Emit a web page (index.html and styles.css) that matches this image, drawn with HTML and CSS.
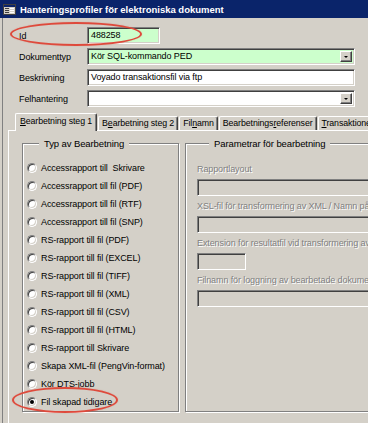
FILE: index.html
```html
<!DOCTYPE html>
<html lang="sv">
<head>
    <meta charset="UTF-8">
    <title>Hanteringsprofiler för elektroniska dokument</title>
    <link rel="stylesheet" href="styles.css">
</head>
<body>
    <div class="window">
        <div class="titlebar">
            <svg class="app-icon" width="13" height="11" viewBox="0 0 13 11">
                <rect x="0.5" y="0.5" width="12" height="10" fill="#d4d0c8" stroke="#404040"/>
                <rect x="1" y="1" width="11" height="2" fill="#0a246a"/>
                <rect x="2" y="4" width="4" height="1" fill="#404040"/>
                <rect x="7" y="4" width="4" height="1" fill="#fff"/>
                <rect x="2" y="6" width="4" height="1" fill="#404040"/>
                <rect x="7" y="6" width="4" height="1" fill="#fff"/>
                <rect x="2" y="8" width="4" height="1" fill="#404040"/>
                <rect x="7" y="8" width="4" height="1" fill="#fff"/>
            </svg>
            <span class="title">Hanteringsprofiler för elektroniska dokument</span>
        </div>

        <div class="form">
            <div class="fields">
                <span class="label">Id</span>
                <div class="field field-id green">488258</div>

                <span class="label">Dokumenttyp</span>
                <div class="field green combo">Kör SQL-kommando PED<span class="drop"></span></div>

                <span class="label">Beskrivning</span>
                <div class="field">Voyado transaktionsfil via ftp</div>

                <span class="label">Felhantering</span>
                <div class="field combo"><span class="drop"></span></div>
            </div>

            <div class="tabs">
                <div class="tab active"><u>B</u>earbetning steg 1</div>
                <div class="tab">B<u>e</u>arbetning steg 2</div>
                <div class="tab">Fil<u>n</u>amn</div>
                <div class="tab">Bearbetnings<u>r</u>eferenser</div>
                <div class="tab"><u>T</u>ransaktioner</div>
            </div>

            <div class="panel">
                <fieldset class="group group-type">
                    <legend>Typ av Bearbetning</legend>
                    <div class="option"><span class="radio"></span>Accessrapport till&nbsp; Skrivare</div>
                    <div class="option"><span class="radio"></span>Accessrapport till fil (PDF)</div>
                    <div class="option"><span class="radio"></span>Accessrapport till fil (RTF)</div>
                    <div class="option"><span class="radio"></span>Accessrapport till fil (SNP)</div>
                    <div class="option"><span class="radio"></span>RS-rapport till fil (PDF)</div>
                    <div class="option"><span class="radio"></span>RS-rapport till fil (EXCEL)</div>
                    <div class="option"><span class="radio"></span>RS-rapport till fil (TIFF)</div>
                    <div class="option"><span class="radio"></span>RS-rapport till fil (XML)</div>
                    <div class="option"><span class="radio"></span>RS-rapport till fil (CSV)</div>
                    <div class="option"><span class="radio"></span>RS-rapport till fil (HTML)</div>
                    <div class="option"><span class="radio"></span>RS-rapport till Skrivare</div>
                    <div class="option"><span class="radio"></span>Skapa XML-fil (PengVin-format)</div>
                    <div class="option"><span class="radio"></span>Kör DTS-jobb</div>
                    <div class="option"><span class="radio checked"></span>Fil skapad tidigare</div>
                </fieldset>

                <fieldset class="group group-params">
                    <legend>Parametrar för bearbetning</legend>
                    <div class="param">
                        <span class="dim">Rapportlayout</span>
                        <div class="field disabled"></div>
                    </div>
                    <div class="param">
                        <span class="dim">XSL-fil för transformering av XML / Namn på</span>
                        <div class="field disabled"></div>
                    </div>
                    <div class="param">
                        <span class="dim">Extension för resultatfil vid transformering av</span>
                        <div class="field disabled short"></div>
                    </div>
                    <div class="param">
                        <span class="dim">Filnamn för loggning av bearbetade dokument</span>
                        <div class="field disabled"></div>
                    </div>
                </fieldset>
            </div>
        </div>

        <!-- röda markeringar -->
        <div class="mark mark-id"></div>
        <div class="mark mark-file"></div>
    </div>
</body>
</html>
```

FILE: styles.css
```css
* {
    margin: 0;
    padding: 0;
    box-sizing: border-box;
}

body {
    width: 368px;
    height: 423px;
    overflow: hidden;
    background: #d4d0c8;
    font-family: 'Liberation Sans', Arial, sans-serif;
    font-size: 9px;
    letter-spacing: -0.1px;
    color: #000;
}

.window {
    position: relative;
    height: 423px;
    overflow: hidden;
}

.titlebar {
    height: 18px;
    background: #0a246a;
    display: flex;
    align-items: center;
    gap: 4px;
    padding-left: 3px;
    color: #fff;
}

.title {
    font-weight: 700;
    font-size: 9.5px;
    letter-spacing: 0;
    white-space: nowrap;
}

.form {
    border-left: 1px solid #808080;
    margin-left: 2px;
    height: 405px;
}

.fields {
    display: grid;
    grid-template-columns: 68px 1fr;
    grid-auto-rows: 17px;
    row-gap: 4px;
    align-items: center;
    padding: 9px 13px 0 16px;
}

.label {
    white-space: nowrap;
}

.field {
    position: relative;
    height: 17px;
    line-height: 13px;
    padding: 1px 3px;
    background: #fff;
    border: 1px solid;
    border-color: #808080 #fff #fff #808080;
    box-shadow: inset 1px 1px 0 #404040, inset -1px -1px 0 #d4d0c8;
    white-space: nowrap;
    overflow: hidden;
}

.field.green {
    background: #ccffcc;
}

.field-id {
    width: 73px;
}

.drop {
    position: absolute;
    right: 2px;
    top: 2px;
    width: 12px;
    height: 11px;
    background: #d4d0c8;
    border: 1px solid;
    border-color: #fff #404040 #404040 #fff;
    box-shadow: inset -1px -1px 0 #808080;
}

.drop::after {
    content: '';
    position: absolute;
    left: 3px;
    top: 4px;
    border-left: 2px solid transparent;
    border-right: 2px solid transparent;
    border-top: 2px solid #000;
}

.tabs {
    display: flex;
    align-items: flex-end;
    gap: 1px;
    height: 19px;
    margin-top: 4px;
    padding-left: 12px;
    white-space: nowrap;
}

.tab {
    flex: none;
    height: 14px;
    line-height: 13px;
    padding: 0 3px;
    font-size: 8.8px;
    border-top: 1px solid #fff;
    border-left: 1px solid #fff;
    border-right: 1px solid #404040;
    border-radius: 2px 2px 0 0;
    box-shadow: inset -1px 0 0 #808080;
}

.tab u {
    text-decoration-thickness: 1px;
}

.tab.active {
    position: relative;
    z-index: 1;
    height: 18px;
    line-height: 15px;
    margin-bottom: -1px;
    padding: 0 4px;
    background: #d4d0c8;
}

.panel {
    display: flex;
    gap: 6px;
    height: 300px;
    margin-left: 5px;
    padding: 7px 0 0 13px;
    border-top: 1px solid #fff;
    border-left: 1px solid #fff;
}

.group {
    flex: none;
    min-width: 0;
    height: 274px;
    border: 1px solid #808080;
    box-shadow: 1px 1px 0 #fff, inset 1px 1px 0 #fff;
}

.group legend {
    margin-left: 12px;
    padding: 0 5px;
    line-height: 11px;
    font-size: 9.5px;
    background: #d4d0c8;
    white-space: nowrap;
}

.group-type {
    width: 157px;
    padding: 10px 0 0 4px;
}

.option {
    display: flex;
    align-items: center;
    gap: 4px;
    height: 18px;
    white-space: nowrap;
}

.radio {
    position: relative;
    flex: none;
    width: 10px;
    height: 10px;
    border-radius: 50%;
    background: #fff;
    border: 1px solid;
    border-color: #808080 #fff #fff #808080;
    box-shadow: inset 1px 1px 0 #404040, inset -1px -1px 0 #d4d0c8;
}

.radio.checked::after {
    content: '';
    position: absolute;
    left: 2px;
    top: 2px;
    width: 4px;
    height: 4px;
    border-radius: 50%;
    background: #000;
}

.group-params {
    width: 240px;
    padding: 15px 0 0 11px;
}

.param {
    display: flex;
    flex-direction: column;
    gap: 4px;
    margin-bottom: 5px;
}

.dim {
    line-height: 11px;
    color: #808080;
    text-shadow: 1px 1px 0 #fff;
    white-space: nowrap;
    overflow: hidden;
}

.field.disabled {
    background: #d4d0c8;
}

.field.short {
    width: 49px;
}

.mark {
    position: absolute;
    border: 2px solid #de4a3c;
    border-radius: 50%;
    box-shadow: 0 0 1px rgba(222, 74, 60, 0.5);
}

.mark-id {
    left: 10px;
    top: 22px;
    width: 132px;
    height: 24px;
}

.mark-file {
    left: 12px;
    top: 387px;
    width: 106px;
    height: 26px;
}
```
